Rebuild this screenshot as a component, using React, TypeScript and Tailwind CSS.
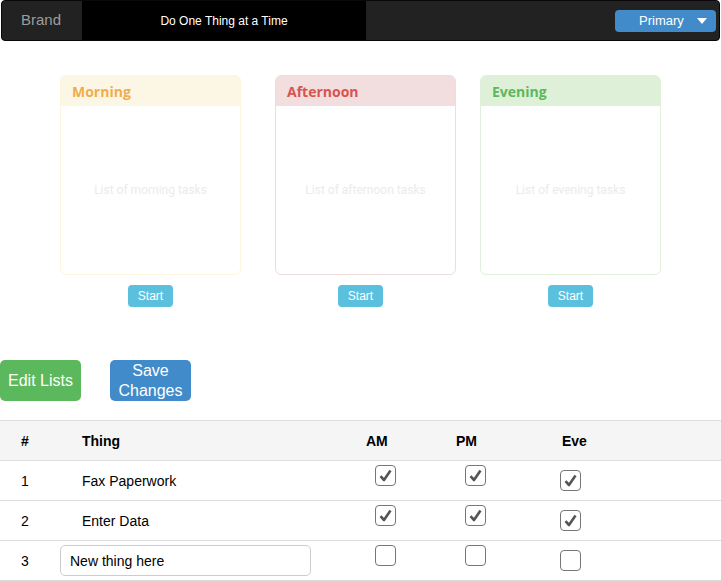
import React from "react";

function Check({ checked, className = "" }: { checked: boolean; className?: string }) {
  return (
    <div className={`w-[21px] h-[21px] rounded-[4px] border border-[#767676] bg-white flex items-center justify-center ${className}`}>
      {checked && (
        <svg width="15" height="15" viewBox="0 0 15 15">
          <path d="M2.5 8.2 L6 12 L12.5 2.5" fill="none" stroke="#555" strokeWidth="2.6" strokeLinejoin="round" strokeLinecap="butt" />
        </svg>
      )}
    </div>
  );
}

function Card({ title, hdr, border, color, text }: { title: string; hdr: string; border: string; color: string; text: string }) {
  return (
    <div className={`w-[181px] h-[200px] rounded-[6px] border ${border} bg-white flex flex-col overflow-hidden`}>
      <div className={`h-[30px] ${hdr} flex items-center pl-[11px] ${color} text-[14px] font-bold`} style={{ fontFamily: "'Open Sans', sans-serif" }}>
        {title}
      </div>
      <div className="flex-1 flex items-center justify-center text-[12px] text-[#ebebeb]" style={{ fontFamily: "Roboto, sans-serif" }}>
        {text}
      </div>
    </div>
  );
}

function StartBtn({ className = "" }: { className?: string }) {
  return (
    <button className={`w-[45px] h-[22px] rounded-[4px] bg-[#5bc0de] text-white text-[12px] leading-none ${className}`}>Start</button>
  );
}

export default function App() {
  return (
    <div className="w-[721px] h-[581px] bg-white overflow-hidden text-[#222]" style={{ fontFamily: "'Liberation Sans', Arial, sans-serif" }}>
      {/* Navbar */}
      <div className="h-[41px] mx-px rounded-[4px] bg-[#222] border border-[#080808] flex items-center overflow-hidden">
        <div className="w-[80px] h-full flex items-center pl-[19px] text-[15px] text-[#9d9d9d]">Brand</div>
        <div className="w-[284px] h-full bg-black flex items-center justify-center text-white text-[12px]">Do One Thing at a Time</div>
        <div className="flex-1" />
        <button className="w-[101px] h-[22px] mr-[3px] rounded-[4px] bg-[#428bca] text-white text-[13px] flex items-center pl-[24px]">
          <span>Primary</span>
          <svg className="ml-[13px]" width="10" height="6" viewBox="0 0 10 6"><path d="M0 0 H10 L5 6 Z" fill="white" /></svg>
        </button>
      </div>

      {/* Cards */}
      <div className="flex pl-[60px] mt-[34px]">
        <div className="flex flex-col items-center">
          <Card title="Morning" hdr="bg-[#fcf7e4]" border="border-[#fdf6dc]" color="text-[#f0ad4e]" text="List of morning tasks" />
          <StartBtn className="mt-[10px]" />
        </div>
        <div className="flex flex-col items-center ml-[34px]">
          <Card title="Afternoon" hdr="bg-[#f2dede]" border="border-[#efdcdc]" color="text-[#d9534f]" text="List of afternoon tasks" />
          <StartBtn className="mt-[10px] -ml-[10px]" />
        </div>
        <div className="flex flex-col items-center ml-[24px]">
          <Card title="Evening" hdr="bg-[#dff0d8]" border="border-[#e1efdb]" color="text-[#5cb85c]" text="List of evening tasks" />
          <StartBtn className="mt-[10px]" />
        </div>
      </div>

      {/* Action buttons */}
      <div className="flex mt-[53px]">
        <button className="w-[81px] h-[41px] rounded-[5px] bg-[#5cb85c] text-white text-[16px]">Edit Lists</button>
        <button className="w-[81px] h-[41px] ml-[29px] rounded-[5px] bg-[#428bca] text-white text-[16px] leading-[20px]">Save<br />Changes</button>
      </div>

      {/* Table */}
      <div className="mt-[19px] text-[14px]">
        <div className="grid grid-cols-[60px_306px_90px_104px_1fr] h-[41px] bg-[#f5f5f5] border-t border-b border-[#ddd] items-center font-bold text-black pt-[2px]">
          <div className="pl-[21px]">#</div>
          <div className="pl-[22px]">Thing</div>
          <div>AM</div>
          <div>PM</div>
          <div className="pl-[2px]">Eve</div>
        </div>
        {[
          { n: "1", t: "Fax Paperwork", c: true },
          { n: "2", t: "Enter Data", c: true },
        ].map((r) => (
          <div key={r.n} className="grid grid-cols-[60px_306px_90px_104px_1fr] h-[40px] border-b border-[#ddd] items-center text-black pt-[2px]">
            <div className="pl-[21px]">{r.n}</div>
            <div className="pl-[22px]">{r.t}</div>
            <div><Check checked={r.c} className="ml-[9px] -mt-[12px]" /></div>
            <div><Check checked={r.c} className="ml-[9px] -mt-[12px]" /></div>
            <div><Check checked={r.c} className="-mt-[2px]" /></div>
          </div>
        ))}
        <div className="grid grid-cols-[60px_306px_90px_104px_1fr] h-[40px] border-b border-[#ddd] items-center text-black pt-[2px]">
          <div className="pl-[21px]">3</div>
          <div>
            <div className="w-[251px] h-[31px] -mt-[2px] rounded-[5px] border border-[#ccc] flex items-center pl-[9px] pt-[2px] text-[14px]">New thing here</div>
          </div>
          <div><Check checked={false} className="ml-[9px] -mt-[12px]" /></div>
          <div><Check checked={false} className="ml-[9px] -mt-[12px]" /></div>
          <div><Check checked={false} className="-mt-[2px]" /></div>
        </div>
      </div>
    </div>
  );
}
